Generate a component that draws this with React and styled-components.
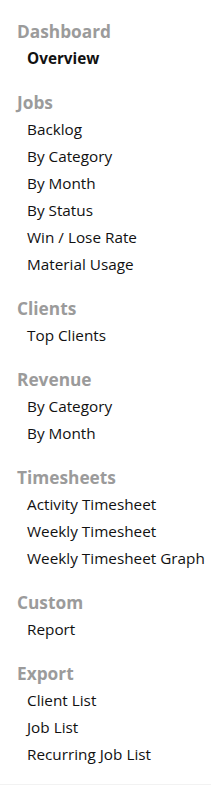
import React from 'react';
import styled, { createGlobalStyle } from 'styled-components';

const GlobalStyle = createGlobalStyle`
  body {
    margin: 0;
    background: #fff;
    font-family: 'Open Sans', 'Liberation Sans', sans-serif;
  }
`;

const Sidebar = styled.nav`
  width: 211px;
  height: 785px;
  box-sizing: border-box;
  padding: 18px 0 0 17px;
  border-bottom: 1px solid #f2f2f2;
`;

const Section = styled.div`
  margin-bottom: 17px;
`;

const Heading = styled.div`
  font-size: 17.3px;
  font-weight: 700;
  line-height: 27px;
  color: #9b9b9b;
`;

const Item = styled.a`
  display: block;
  padding-left: 10px;
  font-size: 15.3px;
  line-height: 27px;
  white-space: nowrap;
  font-weight: ${({ active }) => (active ? 700 : 400)};
  color: #111;
  text-decoration: none;
`;

const sections = [
  { title: 'Dashboard', items: ['Overview'], active: 'Overview' },
  {
    title: 'Jobs',
    items: ['Backlog', 'By Category', 'By Month', 'By Status', 'Win / Lose Rate', 'Material Usage'],
  },
  { title: 'Clients', items: ['Top Clients'] },
  { title: 'Revenue', items: ['By Category', 'By Month'] },
  {
    title: 'Timesheets',
    items: ['Activity Timesheet', 'Weekly Timesheet', 'Weekly Timesheet Graph'],
  },
  { title: 'Custom', items: ['Report'] },
  { title: 'Export', items: ['Client List', 'Job List', 'Recurring Job List'] },
];

const App = () => (
  <>
    <GlobalStyle />
    <Sidebar>
      {sections.map((section) => (
        <Section key={section.title}>
          <Heading>{section.title}</Heading>
          {section.items.map((item) => (
            <Item key={item} active={section.active === item ? 1 : 0}>
              {item}
            </Item>
          ))}
        </Section>
      ))}
    </Sidebar>
  </>
);

export default App;
